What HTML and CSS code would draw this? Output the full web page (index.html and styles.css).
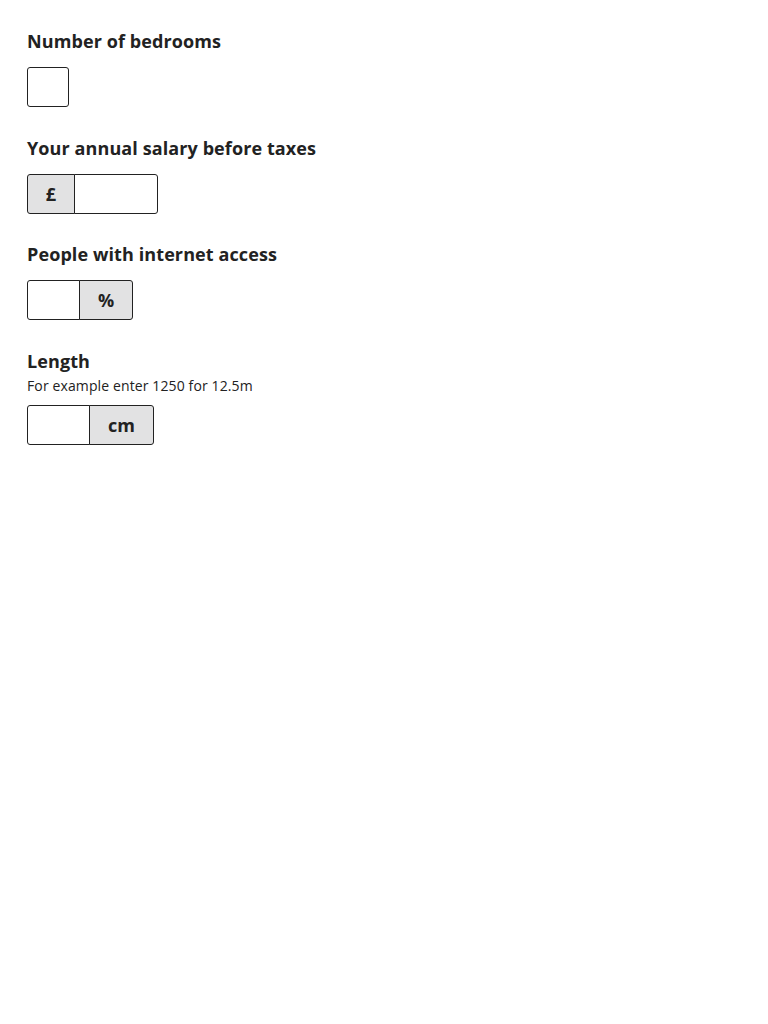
FILE: index.html
```html
<!DOCTYPE html>
<html lang="en">
<head>
<meta charset="utf-8">
<title>Inputs</title>
<link rel="stylesheet" href="styles.css">
</head>
<body>
<main class="page">
  <div class="field">
    <label class="label" for="bedrooms">Number of bedrooms</label>
    <div class="group">
      <input class="input input--w2" id="bedrooms" type="text">
    </div>
  </div>
  <div class="field">
    <label class="label" for="salary">Your annual salary before taxes</label>
    <div class="group">
      <span class="affix affix--prefix">£</span>
      <input class="input input--after-prefix input--salary" id="salary" type="text">
    </div>
  </div>
  <div class="field">
    <label class="label" for="internet">People with internet access</label>
    <div class="group">
      <input class="input input--before-suffix input--pct" id="internet" type="text">
      <span class="affix affix--suffix affix--pct">%</span>
    </div>
  </div>
  <div class="field">
    <label class="label label--hinted" for="length">Length</label>
    <p class="hint">For example enter 1250 for 12.5m</p>
    <div class="group">
      <input class="input input--before-suffix input--len" id="length" type="text">
      <span class="affix affix--suffix affix--cm">cm</span>
    </div>
  </div>
</main>
</body>
</html>
```
FILE: styles.css
```css
* { box-sizing: border-box; }
html, body { margin: 0; padding: 0; background: #fff; }
body {
  font-family: "Open Sans", "Noto Sans", "Liberation Sans", sans-serif;
  color: #222222;
}
.page {
  padding: 28px 27px;
  display: flex;
  flex-direction: column;
  gap: 27.5px;
}
.field { display: flex; flex-direction: column; align-items: flex-start; }
.label {
  font-size: 18px;
  font-weight: 700;
  line-height: 27px;
  letter-spacing: 0.1px;
  margin-bottom: 12px;
}
.label--hinted { margin-bottom: 0; }
.hint {
  margin: 0 0 9px;
  font-size: 14px;
  line-height: 21px;
  letter-spacing: 0.12px;
}
.group { display: flex; height: 40px; }
.input {
  height: 40px;
  border: 1px solid #222222;
  border-radius: 3px;
  background: #fff;
  font: inherit;
  padding: 0 8px;
  margin: 0;
  outline: none;
}
.input--w2 { width: 42px; }
.input--salary { width: 84px; }
.input--pct { width: 53px; }
.input--len { width: 63px; }
.input--after-prefix { border-top-left-radius: 0; border-bottom-left-radius: 0; margin-left: -1px; }
.input--before-suffix { border-top-right-radius: 0; border-bottom-right-radius: 0; }
.affix {
  display: flex;
  align-items: center;
  justify-content: center;
  height: 40px;
  background: #e2e2e3;
  border: 1px solid #222222;
  font-size: 18px;
  font-weight: 700;
  line-height: 1;
}
.affix--prefix { width: 48px; border-radius: 3px 0 0 3px; }
.affix--suffix { border-radius: 0 3px 3px 0; margin-left: -1px; }
.affix--pct { width: 54px; }
.affix--cm { width: 65px; }
```
